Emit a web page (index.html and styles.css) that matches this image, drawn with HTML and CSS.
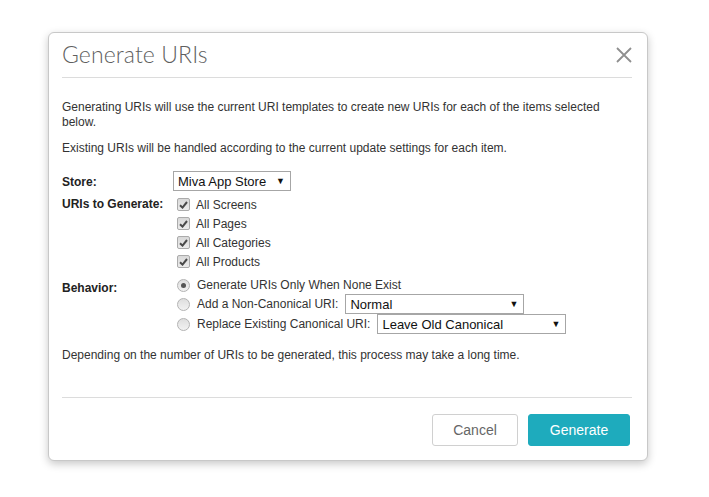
FILE: index.html
```html
<!DOCTYPE html>
<html>
<head>
<meta charset="utf-8">
<link rel="stylesheet" href="styles.css">
</head>
<body>
<div class="dialog">
  <div class="header">
    <h1 class="title">Generate URIs</h1>
    <span class="close" aria-label="Close">
      <svg width="16" height="16" viewBox="0 0 16 16"><path d="M1 1 L15 15 M15 1 L1 15" stroke="#8f8f8f" stroke-width="1.8" fill="none"/></svg>
    </span>
  </div>
  <div class="body">
    <p class="para">Generating URIs will use the current URI templates to create new URIs for each of the items selected below.</p>
    <p class="para">Existing URIs will be handled according to the current update settings for each item.</p>
    <div class="form">
      <div class="label lbl-store">Store:</div>
      <div class="ctrl ctrl-store">
        <span class="select sel-store"><span class="sel-text">Miva App Store</span><span class="arrow">&#9660;</span></span>
      </div>

      <div class="label lbl-uris">URIs to Generate:</div>
      <div class="ctrl ctrl-uris">
        <div class="opt"><span class="cb"><svg width="9" height="8" viewBox="0 0 9 8"><path d="M1 4.2 L3.5 6.6 L8 1" stroke="#4a4a4a" stroke-width="2" fill="none"/></svg></span>All Screens</div>
        <div class="opt"><span class="cb"><svg width="9" height="8" viewBox="0 0 9 8"><path d="M1 4.2 L3.5 6.6 L8 1" stroke="#4a4a4a" stroke-width="2" fill="none"/></svg></span>All Pages</div>
        <div class="opt"><span class="cb"><svg width="9" height="8" viewBox="0 0 9 8"><path d="M1 4.2 L3.5 6.6 L8 1" stroke="#4a4a4a" stroke-width="2" fill="none"/></svg></span>All Categories</div>
        <div class="opt"><span class="cb"><svg width="9" height="8" viewBox="0 0 9 8"><path d="M1 4.2 L3.5 6.6 L8 1" stroke="#4a4a4a" stroke-width="2" fill="none"/></svg></span>All Products</div>
      </div>

      <div class="label lbl-behavior">Behavior:</div>
      <div class="ctrl ctrl-behavior">
        <div class="ropt first"><span class="rb on"><span class="dot"></span></span>Generate URIs Only When None Exist</div>
        <div class="ropt"><span class="rb"></span>Add a Non-Canonical URI:<span class="select sel-normal"><span class="sel-text">Normal</span><span class="arrow">&#9660;</span></span></div>
        <div class="ropt"><span class="rb"></span>Replace Existing Canonical URI:<span class="select sel-canon"><span class="sel-text">Leave Old Canonical</span><span class="arrow">&#9660;</span></span></div>
      </div>
    </div>
    <p class="note">Depending on the number of URIs to be generated, this process may take a long time.</p>
  </div>
  <div class="footer">
    <button class="btn btn-cancel">Cancel</button>
    <button class="btn btn-primary">Generate</button>
  </div>
</div>
</body>
</html>
```

FILE: styles.css
```css
html, body {
  margin: 0;
  padding: 0;
  background: #ffffff;
}
body {
  width: 709px;
  height: 497px;
  overflow: hidden;
  padding: 32px 0 0 48px;
  box-sizing: border-box;
  font-family: "Liberation Sans", Arial, sans-serif;
  font-size: 12px;
  color: #333333;
}
.dialog {
  width: 600px;
  height: 429px;
  box-sizing: border-box;
  border: 1px solid #c8c8c8;
  border-radius: 6px;
  background: #fff;
  box-shadow: 0 3px 8px rgba(0,0,0,0.22);
  padding: 0 15px 0 13px;
  display: flex;
  flex-direction: column;
}
.header {
  display: flex;
  align-items: flex-start;
  justify-content: space-between;
  padding-top: 6px;
  height: 38px;
  border-bottom: 1px solid #dcdcdc;
}
.title {
  margin: 0;
  font-family: Lato, "Open Sans", sans-serif;
  font-weight: 300;
  font-size: 23px;
  line-height: 30px;
  color: #5f5f5f;
  letter-spacing: 0.1px;
}
.close {
  display: flex;
  width: 16px;
  height: 16px;
  margin-top: 8px;
}
.body {
  padding-top: 22px;
  flex: 1;
}
.para {
  margin: 0 0 11px 0;
  line-height: 15px;
  padding-right: 20px;
}
.form {
  display: grid;
  grid-template-columns: 111px 1fr;
  margin-top: 15px;
}
.label {
  font-weight: bold;
  color: #222;
  line-height: 16px;
}
.lbl-store { padding-top: 3px; }
.ctrl-store { height: 20px; }
.lbl-uris { padding-top: 5px; }
.ctrl-uris { padding-top: 4px; }
.lbl-behavior { padding-top: 9px; }
.ctrl-behavior { padding-top: 5px; }
.select {
  display: inline-flex;
  align-items: center;
  justify-content: space-between;
  box-sizing: border-box;
  height: 20px;
  border: 1px solid #a6a6a6;
  background: #fff;
  padding: 0 5px 0 4px;
  font-size: 13px;
  color: #111;
}
.arrow {
  font-size: 9px;
  color: #111;
  margin-left: 8px;
}
.sel-store { width: 118px; }
.sel-normal { width: 179px; margin-left: 7px; }
.sel-canon { width: 189px; margin-left: 7px; }
.opt {
  display: flex;
  align-items: center;
  height: 19px;
  color: #333;
}
.cb {
  width: 13px;
  height: 13px;
  box-sizing: border-box;
  border: 1px solid #ababab;
  border-radius: 2px;
  background: linear-gradient(#d9d9d9, #ececec);
  margin: 0 6px 0 4px;
  display: flex;
  align-items: center;
  justify-content: center;
}
.ropt {
  display: flex;
  align-items: center;
  height: 20px;
  color: #333;
}
.ropt.first { height: 18px; }
.rb {
  width: 13px;
  height: 13px;
  box-sizing: border-box;
  border: 1px solid #b3b3b3;
  border-radius: 50%;
  background: linear-gradient(#dedede, #f2f2f2);
  margin: 0 7px 0 4px;
  display: flex;
  align-items: center;
  justify-content: center;
}
.rb .dot {
  width: 5px;
  height: 5px;
  border-radius: 50%;
  background: #555;
}
.note {
  margin: 14px 0 0 0;
  line-height: 15px;
}
.footer {
  border-top: 1px solid #dcdcdc;
  display: flex;
  justify-content: flex-end;
  gap: 10px;
  padding: 16px 2px 14px 0;
}
.btn {
  height: 32px;
  box-sizing: border-box;
  border-radius: 3px;
  font-family: "Liberation Sans", Arial, sans-serif;
  font-size: 14px;
  cursor: pointer;
}
.btn-cancel {
  width: 86px;
  background: #fff;
  border: 1px solid #d0d0d0;
  color: #666;
}
.btn-primary {
  width: 102px;
  background: #1eabbd;
  border: 1px solid #1eabbd;
  color: #fff;
}
```
